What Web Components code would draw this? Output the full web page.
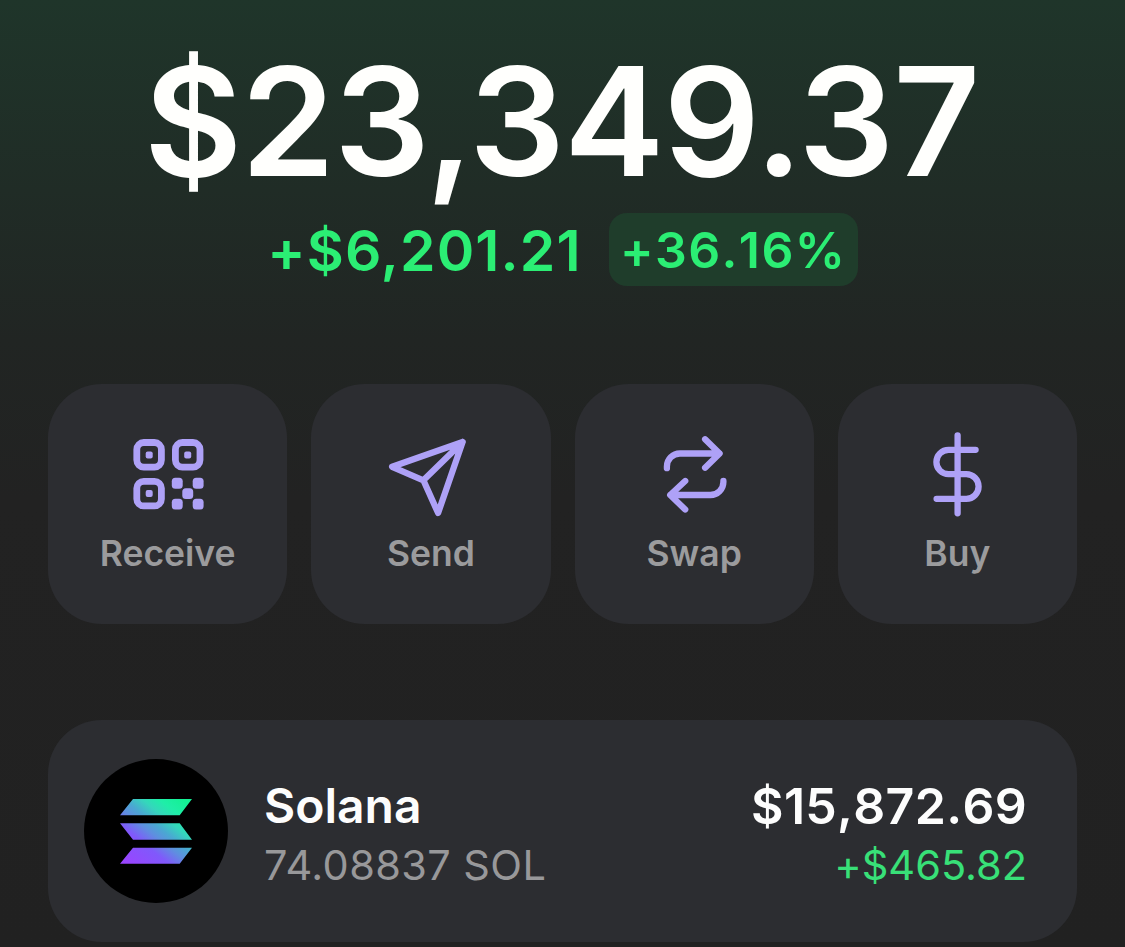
<!DOCTYPE html>
<html lang="en">
<head>
  <meta charset="UTF-8">
  <title>Wallet</title>
  <style>
    body {
      margin: 0;
      height: 947px;
      overflow: hidden;
      font-family: Inter, "Liberation Sans", sans-serif;
      background: linear-gradient(#1f352a 0px, #202c26 190px, #212523 340px, #222222 500px, #212121 100%);
    }
  </style>
</head>
<body>
  <wallet-home>
    <wallet-balance slot="balance" total="$23,349.37" change="+$6,201.21" percent="+36.16%"></wallet-balance>

    <action-button slot="actions" label="Receive">
      <svg viewBox="-2.4 0 100 100" fill="currentColor">
        <g fill="none" stroke="currentColor" stroke-width="6.8">
          <rect x="16.4" y="17.5" width="24.6" height="24.6" rx="7"/>
          <rect x="55" y="17.5" width="24.6" height="24.6" rx="7"/>
          <rect x="16.4" y="56.3" width="24.6" height="24.6" rx="7"/>
        </g>
        <rect x="25.3" y="26.4" width="7" height="7" rx="2"/>
        <rect x="63.8" y="26.4" width="7" height="7" rx="2"/>
        <rect x="25.3" y="65.1" width="7" height="7" rx="2"/>
        <rect x="51.4" y="52.8" width="10.9" height="10.9" rx="3.5"/>
        <rect x="72.3" y="52.8" width="10.9" height="10.9" rx="3.5"/>
        <rect x="61.9" y="63.2" width="10.9" height="10.9" rx="3.5"/>
        <rect x="51.4" y="73.7" width="10.9" height="10.9" rx="3.5"/>
        <rect x="72.3" y="73.7" width="10.9" height="10.9" rx="3.5"/>
      </svg>
    </action-button>
    <action-button slot="actions" label="Send">
      <svg viewBox="0.9 0 100 100">
        <path d="M82.5 17 L12 41.8 L43.3 55.3 L58 88 Z M82.5 17 L43.3 55.3"/>
      </svg>
    </action-button>
    <action-button slot="actions" label="Swap">
      <svg viewBox="-5.9 0 100 100">
        <path d="M17 43.2 V41.5 A13 13 0 0 1 30 28.5 H69.5 M55.2 14.3 L69.7 28.5 L55.2 42.7"/>
        <path d="M73.5 56 V57 A13 13 0 0 1 60.5 70 H20.5 M35.3 56 L20.3 70 L35.3 84.5"/>
      </svg>
    </action-button>
    <action-button slot="actions" label="Buy">
      <svg viewBox="-2.6 0 100 100">
        <path d="M48 10.3 V88.3 M66 24.8 H39 A12.2 12.2 0 0 0 39 49.2 H56.7 A12.3 12.3 0 0 1 56.7 73.8 H27"/>
      </svg>
    </action-button>

    <token-row slot="tokens" name="Solana" amount="74.08837 SOL" value="$15,872.69" change="+$465.82">
      <svg viewBox="0 0 144 144" width="144" height="144">
        <defs>
          <linearGradient id="sol" gradientUnits="userSpaceOnUse" x1="43" y1="109" x2="101" y2="37">
            <stop offset="0.05" stop-color="#9945ff"/>
            <stop offset="0.32" stop-color="#8059fb"/>
            <stop offset="0.46" stop-color="#5f8ee0"/>
            <stop offset="0.56" stop-color="#4aa8d2"/>
            <stop offset="0.68" stop-color="#35d6bc"/>
            <stop offset="0.8" stop-color="#1feea8"/>
            <stop offset="0.95" stop-color="#14f195"/>
          </linearGradient>
        </defs>
        <circle cx="72" cy="72" r="72"/>
        <path fill="url(#sol)" d="M49 40 H108 L95.7 56.3 H36 Z M36 64.3 H95.7 L108 80.7 H49 Z M49 88.7 H108 L95.7 104.7 H36 Z"/>
      </svg>
    </token-row>
  </wallet-home>

  <script>
    // page column: balance, row of actions, list of tokens
    class WalletHome extends HTMLElement {
      constructor() {
        super();
        this.attachShadow({ mode: 'open' });
        this.shadowRoot.innerHTML = `
          <style>
            :host {
              display: block;
              box-sizing: border-box;
              width: 1125px;
              padding: 31px 48px 0;
            }
            .actions {
              display: grid;
              grid-template-columns: repeat(4, 1fr);
              gap: 24px;
              margin: 98px 0 96px;
            }
          </style>
          <slot name="balance"></slot>
          <div class="actions"><slot name="actions"></slot></div>
          <slot name="tokens"></slot>
        `;
      }
    }

    class WalletBalance extends HTMLElement {
      constructor() {
        super();
        this.attachShadow({ mode: 'open' });
        this.shadowRoot.innerHTML = `
          <style>
            :host {
              display: flex;
              flex-direction: column;
              align-items: center;
              color: #2bee74;
              white-space: nowrap;
            }
            .total {
              color: #fffffd;
              font-size: 151px;
              font-weight: 600;
              line-height: 180px;
              letter-spacing: -1.1px;
              padding-right: 2px;
            }
            .row {
              display: flex;
              align-items: center;
              gap: 27px;
              height: 73px;
              margin-top: 2px;
            }
            .change {
              font-size: 57px;
              font-weight: 600;
              line-height: 72px;
              letter-spacing: 1.1px;
              padding-top: 2px;
            }
            .percent {
              box-sizing: border-box;
              width: 249px;
              text-align: center;
              font-size: 50px;
              font-weight: 600;
              font-kerning: none;
              line-height: 75px;
              height: 73px;
              letter-spacing: 1.4px;
              border-radius: 18px;
              background: #1f3d2b;
            }
          </style>
          <div class="total">${this.getAttribute('total')}</div>
          <div class="row">
            <span class="change">${this.getAttribute('change')}</span>
            <span class="percent">${this.getAttribute('percent')}</span>
          </div>
        `;
      }
    }

    class ActionButton extends HTMLElement {
      constructor() {
        super();
        this.attachShadow({ mode: 'open' });
        this.shadowRoot.innerHTML = `
          <style>
            :host {
              display: flex;
              flex-direction: column;
              align-items: center;
              box-sizing: border-box;
              height: 240px;
              padding-top: 41px;
              border-radius: 54px;
              background: #2c2d31;
              color: #aea1f7;
            }
            ::slotted(svg) {
              width: 100px;
              height: 100px;
              fill: none;
              stroke: currentColor;
              stroke-width: 6.3;
              stroke-linecap: round;
              stroke-linejoin: round;
            }
            ::slotted(svg[fill]) {
              fill: currentColor;
              stroke: none;
            }
            .label {
              margin-top: 7px;
              color: #9b9b9d;
              font-size: 35.5px;
              font-weight: 600;
              line-height: 44px;
            }
          </style>
          <slot></slot>
          <span class="label">${this.getAttribute('label')}</span>
        `;
      }
    }

    class TokenRow extends HTMLElement {
      constructor() {
        super();
        this.attachShadow({ mode: 'open' });
        this.shadowRoot.innerHTML = `
          <style>
            :host {
              display: flex;
              align-items: center;
              box-sizing: border-box;
              height: 222px;
              padding: 0 51px 0 36px;
              border-radius: 54px;
              background: #2c2d31;
              white-space: nowrap;
            }
            ::slotted(svg) {
              flex: none;
            }
            .left, .right {
              display: flex;
              flex-direction: column;
              padding-top: 8px;
            }
            .left {
              flex: 1;
              margin-left: 36px;
            }
            .right {
              align-items: flex-end;
              margin-right: -1px;
            }
            .name, .value {
              color: #fdfdfd;
              font-weight: 600;
              line-height: 60px;
            }
            .name {
              font-size: 48px;
            }
            .value {
              font-size: 50px;
              font-kerning: none;
              letter-spacing: 0.3px;
            }
            .amount, .change {
              font-size: 41.5px;
              line-height: 58px;
            }
            .amount {
              color: #98989a;
              letter-spacing: 0.4px;
            }
            /* keep the plus sign on the baseline */
            .change {
              color: #38e078;
              font-feature-settings: "calt" 0;
            }
          </style>
          <slot></slot>
          <div class="left">
            <span class="name">${this.getAttribute('name')}</span>
            <span class="amount">${this.getAttribute('amount')}</span>
          </div>
          <div class="right">
            <span class="value">${this.getAttribute('value')}</span>
            <span class="change">${this.getAttribute('change')}</span>
          </div>
        `;
      }
    }

    customElements.define('wallet-home', WalletHome);
    customElements.define('wallet-balance', WalletBalance);
    customElements.define('action-button', ActionButton);
    customElements.define('token-row', TokenRow);
  </script>
</body>
</html>
